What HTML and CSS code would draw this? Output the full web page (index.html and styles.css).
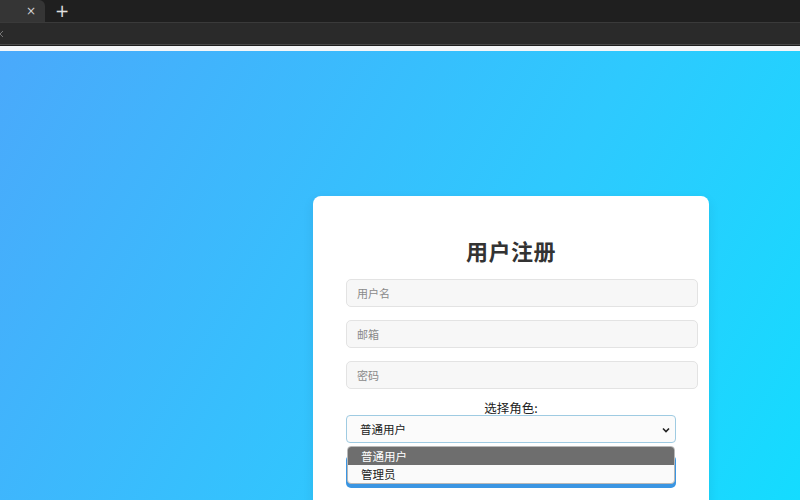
FILE: index.html
```html
<!DOCTYPE html>
<html lang="zh">
<head>
<meta charset="utf-8">
<title>用户注册</title>
<link rel="stylesheet" href="styles.css">
</head>
<body>
<div class="chrome">
  <div class="tabbar">
    <div class="tab"><span class="tab-close">×</span></div>
    <span class="tab-new">+</span>
  </div>
  <div class="toolbar"><svg class="back" width="4" height="8" viewBox="0 0 4 8"><path d="M3 1 L0 4 L3 7" fill="none" stroke="#777" stroke-width="1"/></svg></div>
  <div class="strip"></div>
</div>
<div class="page">
  <form class="card">
    <h2 class="title">用户注册</h2>
    <input class="field" type="text" placeholder="用户名">
    <input class="field" type="email" placeholder="邮箱">
    <input class="field" type="password" placeholder="密码">
    <label class="role-label">选择角色:</label>
    <div class="select-wrap">
      <div class="select">普通用户</div>
      <svg class="chevron" width="8" height="6" viewBox="0 0 8 6"><path d="M1 1.5 L4 4.5 L7 1.5" fill="none" stroke="#222" stroke-width="1.6"/></svg>
      <ul class="dropdown">
        <li class="opt active">普通用户</li>
        <li class="opt">管理员</li>
      </ul>
    </div>
    <button class="submit" type="button">注册</button>
  </form>
</div>
</body>
</html>
```
FILE: styles.css
```css
html, body { margin: 0; padding: 0; }
body {
  width: 800px;
  height: 500px;
  overflow: hidden;
  font-family: "Noto Sans CJK SC", "Noto Sans", sans-serif;
  background: #202020;
}
.chrome { display: flex; flex-direction: column; }
.tabbar {
  height: 22px;
  display: flex;
  align-items: center;
  background: #1f1f1f;
}
.tab {
  width: 45px;
  height: 22px;
  background: #353535;
  border-top-right-radius: 6px;
  display: flex;
  align-items: center;
  justify-content: flex-end;
  padding-right: 9px;
  box-sizing: border-box;
}
.tab-close { color: #cfcfcf; font-size: 12px; line-height: 1; font-family: "DejaVu Sans", sans-serif; }
.tab-new { color: #e0e0e0; font-size: 17px; line-height: 1; margin-left: 10px; font-family: "DejaVu Sans", sans-serif; }
.toolbar {
  height: 21px;
  background: #2a2a2a;
  border-top: 1px solid #3a3a3a;
  border-bottom: 1px solid #4a4a4a;
  display: flex;
  align-items: center;
}
.back { margin-left: 0; }
.strip { height: 5px; background: #f4f6f8; border-top: 1px solid #1e1e1e; }
.page {
  height: 450px;
  background: linear-gradient(120deg, #4aa9fb 0%, #2ec9fe 60%, #14dcff 100%);
  padding-top: 145px;
  box-sizing: border-box;
}
.card {
  margin-left: 313px;
  width: 330px;
  padding: 39px 33px 40px;
  background: #fff;
  border-radius: 8px;
  display: flex;
  flex-direction: column;
  box-shadow: 0 4px 12px rgba(0,0,0,0.08);
}
.title {
  margin: 0 0 14px;
  font-size: 22px;
  line-height: 30px;
  font-weight: 700;
  text-align: center;
  color: #333;
  letter-spacing: 0.5px;
}
.field {
  width: 100%;
  box-sizing: content-box;
  height: 14px;
  padding: 6px 10px;
  margin: 0 0 13px;
  font: 11px/14px "Noto Sans CJK SC", sans-serif;
  color: #333;
  background: #f7f7f7;
  border: 1px solid #e3e3e3;
  border-radius: 5px;
  outline: none;
}
.field::placeholder { color: #8a8a8a; }
.field:last-of-type { margin-bottom: 0; }
.role-label {
  margin-top: 12px;
  font-size: 12.5px;
  line-height: 14px;
  text-align: center;
  color: #222;
}
.select-wrap { position: relative; }
.select {
  height: 28px;
  box-sizing: border-box;
  padding: 0 13px;
  font-size: 11.5px;
  line-height: 26px;
  color: #222;
  background: #fbfbfb;
  border: 1px solid #9fcbe2;
  border-radius: 4px;
}
.chevron { position: absolute; right: 6px; top: 12px; }
.dropdown {
  position: absolute;
  left: 1px;
  right: 1px;
  top: 31px;
  margin: 0;
  padding: 0;
  list-style: none;
  background: #fafafa;
  border: 1px solid #b8b8b8;
  border-radius: 4px;
  overflow: hidden;
  z-index: 2;
}
.opt {
  height: 18px;
  padding: 0 13px;
  font-size: 11.5px;
  line-height: 18px;
  color: #222;
}
.opt.active { background: #6e6e6e; color: #fff; }
.submit {
  margin-top: 12px;
  height: 33px;
  border: none;
  border-radius: 5px;
  background: #3a95e2;
  color: #fff;
  font: 13px "Noto Sans CJK SC", sans-serif;
}
```
